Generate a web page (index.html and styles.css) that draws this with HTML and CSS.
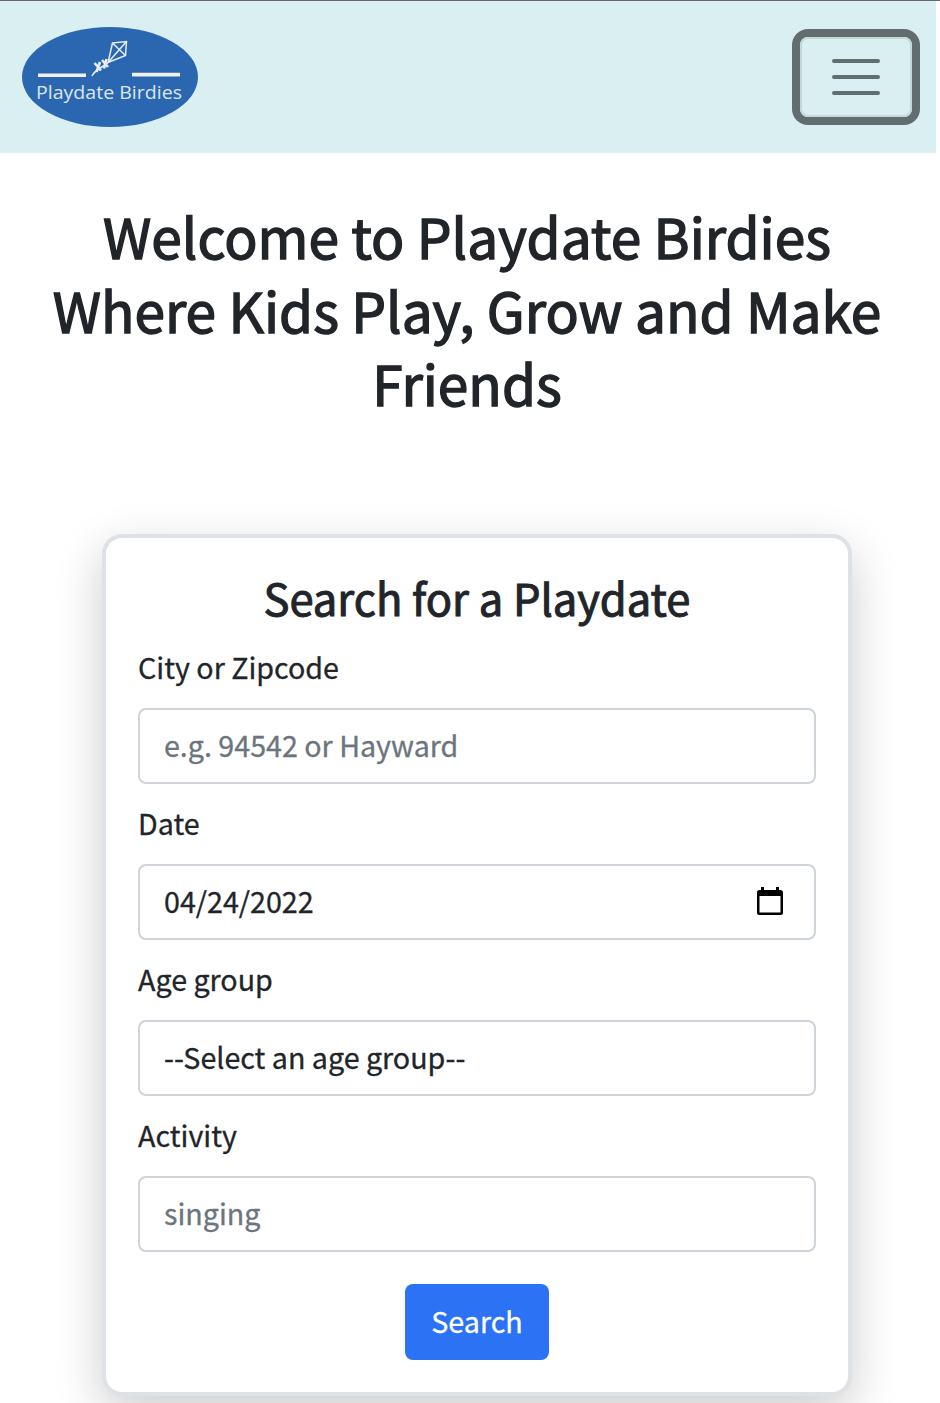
FILE: index.html
```
<!DOCTYPE html>
<html lang="en">
<head>
<meta charset="utf-8">
<title>Playdate Birdies</title>
<link rel="stylesheet" href="styles.css">
</head>
<body>
<div class="page">
  <header class="navbar">
    <svg class="logo" viewBox="0 0 176 100" role="img" aria-label="Playdate Birdies">
      <ellipse cx="88" cy="50" rx="88" ry="50" fill="#2b67b0"/>
      <path d="M16 48.3H64M110 47.6H158" stroke="#f1f0ec" stroke-width="3.6"/>
      <g fill="none" stroke="#e8edf0" stroke-width="1.5">
        <path d="M90.500 16L104.500 14.500L103.500 28.500L86 35.500Z M90.500 16L103.500 28.500M104.500 14.500L86 35.500"/>
        <path d="M86 35.500C82 40 74 41 70 49"/>
        <path d="M72.500 36L79 43.500M78 35L74.500 45M80 33L86 40M84.500 32L82 41.500" stroke-width="2.600"/>
      </g>
      <text class="logo-text" x="14" y="71.500" textLength="146" lengthAdjust="spacingAndGlyphs">Playdate Birdies</text>
    </svg>
    <button class="toggler" aria-label="Toggle navigation">
      <svg viewBox="0 0 60 60" class="toggler-icon"><path d="M8 14H52M8 30H52M8 46H52"/></svg>
    </button>
  </header>
  <main>
    <h1 class="title">Welcome to Playdate Birdies<br>Where Kids Play, Grow and Make<br>Friends</h1>
    <form class="card">
      <h2 class="card-title">Search for a Playdate</h2>
      <label class="label">City or Zipcode</label>
      <div class="field placeholder">e.g. 94542 or Hayward</div>
      <label class="label">Date</label>
      <div class="field">04/24/2022
        <svg class="calendar" viewBox="0 0 26 28"><path d="M4 0H7V3H19V0H22V3H23.500Q26 3 26 5.500V25.500Q26 28 23.500 28H2.500Q0 28 0 25.500V5.500Q0 3 2.500 3H4ZM2.500 9V25.500H23.500V9Z" fill-rule="evenodd"/></svg>
      </div>
      <label class="label">Age group</label>
      <div class="field">--Select an age group--</div>
      <label class="label">Activity</label>
      <div class="field placeholder">singing</div>
      <button type="button" class="submit">Search</button>
    </form>
  </main>
</div>
</body>
</html>
```
FILE: styles.css
```
* { box-sizing: border-box; }
html { overflow: hidden; }
body {
  margin: 0;
  height: 1403px;
  overflow: hidden;
  background: #fff;
  color: #212529;
  font-family: "Noto Sans CJK SC", "Noto Sans", sans-serif;
  font-size: 28.650px;
  -webkit-text-stroke: .3px currentColor;
  border-top: 1px solid #65666c;
}
.page { width: 936px; }
.navbar {
  display: flex;
  justify-content: space-between;
  align-items: center;
  height: 152px;
  padding: 0 24px 0 22px;
  background: #daeff2;
}
.logo { width: 176px; height: 100px; }
.logo-text { font-family: "Open Sans", sans-serif; font-size: 19px; fill: #dbe6ee; -webkit-text-stroke: 0; }
.toggler {
  display: flex;
  justify-content: center;
  align-items: center;
  width: 112px;
  height: 80px;
  padding: 0;
  border: 2px solid #c4d7da;
  border-radius: 8px;
  background: transparent;
  box-shadow: 0 0 0 8px #626d6f;
}
.toggler-icon { width: 60px; height: 60px; }
.toggler-icon path { fill: none; stroke: #626d6f; stroke-width: 4; stroke-linecap: round; }
.title {
  margin: 46px 2px 0 0;
  text-align: center;
  font-size: 55px;
  line-height: 73.500px;
  font-weight: 400;
  -webkit-text-stroke: 1.400px #212529;
}
.card {
  display: flex;
  flex-direction: column;
  width: 750px;
  height: 862px;
  margin: 114px 0 0 102px;
  padding: 31px 32px 32px;
  border: 4px solid #dee2e6;
  border-radius: 20px;
  background: #fff;
  box-shadow: 0 16px 48px rgba(0, 0, 0, .2);
}
.card-title {
  margin: 0 0 16px;
  text-align: center;
  font-size: 43.500px;
  line-height: 58px;
  font-weight: 400;
  -webkit-text-stroke: 1px #212529;
}
.label { height: 48px; line-height: 48px; margin-bottom: 17px; }
.field {
  display: flex;
  justify-content: space-between;
  align-items: center;
  height: 76px;
  margin-bottom: 15px;
  padding: 0 31px 3px 24px;
  border: 2px solid #ced4da;
  border-radius: 8px;
}
.placeholder { color: #6c757d; }
.calendar { width: 26px; height: 28px; margin-top: 2px; }
.submit {
  align-self: center;
  width: 144px;
  height: 76px;
  margin-top: 17px;
  padding: 0 0 3px;
  border: 0;
  border-radius: 8px;
  background: #2c72f4;
  color: #fff;
  font: inherit;
}
```
